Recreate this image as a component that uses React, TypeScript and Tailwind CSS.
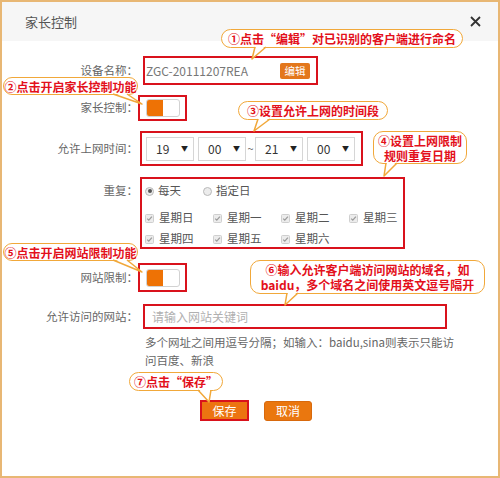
const font = { fontFamily: '"Noto Sans CJK SC", "Noto Sans", sans-serif' };

function Toggle() {
  return (
    <div className="flex h-[18px] w-[34px] overflow-hidden rounded-[3px] border border-[#d2d2d2] bg-white">
      <div className="h-full w-[16px] bg-[#ee7205]" />
    </div>
  );
}

function TimeSelect({ value }: { value: string }) {
  return (
    <div className="flex h-[24px] w-[48px] items-center justify-between border border-[#d6d6d6] bg-white pl-[9px] pr-[5px] text-[12px] text-[#333]">
      <span>{value}</span>
      <span className="text-[7px] text-[#222]">▼</span>
    </div>
  );
}

function Radio({ checked, label }: { checked?: boolean; label: string }) {
  return (
    <div className="flex items-center gap-[4px]">
      <span className="flex h-[9px] w-[9px] items-center justify-center rounded-full border border-[#b9b9b9] bg-[#ececec]">
        {checked && <span className="h-[4px] w-[4px] rounded-full bg-[#555]" />}
      </span>
      <span>{label}</span>
    </div>
  );
}

function Check({ label }: { label: string }) {
  return (
    <div className="flex items-center gap-[5px]">
      <svg width="9" height="9" viewBox="0 0 9 9">
        <rect x="0.5" y="0.5" width="8" height="8" rx="1" fill="#ececec" stroke="#cfcfcf" />
        <path d="M2.2 4.6 L3.8 6.2 L6.9 2.6" fill="none" stroke="#9a9a9a" strokeWidth="1.2" />
      </svg>
      <span>{label}</span>
    </div>
  );
}

function Label({ children, className = '' }: { children: React.ReactNode; className?: string }) {
  return <div className={`w-[136px] shrink-0 text-right text-[11.5px] text-[#666] ${className}`}>{children}</div>;
}

// callout bubbles laid over the form
const bubbles = [
  { left: 221, top: 29, w: 242, h: 19, lines: ['①点击“编辑”对已识别的客户端进行命名'] },
  { left: 3, top: 77, w: 135, h: 18, lines: ['②点击开启家长控制功能'] },
  { left: 238, top: 101, w: 150, h: 19, lines: ['③设置允许上网的时间段'] },
  { left: 373, top: 131, w: 94, h: 33, lines: ['④设置上网限制', '规则重复日期'] },
  { left: 3, top: 243, w: 135, h: 18, lines: ['⑤点击开启网站限制功能'] },
  { left: 250, top: 260, w: 235, h: 34, lines: ['⑥输入允许客户端访问网站的域名，如', 'baidu，多个域名之间使用英文逗号隔开'] },
  { left: 129, top: 372, w: 94, h: 19, lines: ['⑦点击“保存”'] },
];

// tail: base x1..x2 on bubble bottom y, tip point
const tails = [
  { x1: 255, x2: 266, y: 48, tx: 252, ty: 59 },
  { x1: 113, x2: 127, y: 95, tx: 142, ty: 104 },
  { x1: 258, x2: 270, y: 120, tx: 254, ty: 131 },
  { x1: 386, x2: 397, y: 164, tx: 384, ty: 176 },
  { x1: 113, x2: 127, y: 261, tx: 142, ty: 272 },
  { x1: 287, x2: 298, y: 294, tx: 285, ty: 305 },
  { x1: 198, x2: 211, y: 391, tx: 209, ty: 402 },
];

export default function App() {
  const weekdays = ['星期日', '星期一', '星期二', '星期三', '星期四', '星期五', '星期六'];

  return (
    <div className="relative h-[478px] w-[500px] overflow-hidden bg-white" style={font}>
      <div className="flex h-full w-full flex-col border-2 border-[#e8b774] bg-white">
        {/* Header */}
        <div className="flex h-[39px] shrink-0 items-center justify-between bg-[#f6f6f6] pl-[23px] pr-[17px]">
          <span className="text-[13px] text-[#555]">家长控制</span>
          <svg width="11" height="11" viewBox="0 0 11 11">
            <path d="M1 1 L10 10 M10 1 L1 10" stroke="#333" strokeWidth="1.8" />
          </svg>
        </div>

        {/* Form */}
        <div className="flex flex-col">
          <div className="mt-[15px] flex items-center">
            <Label>设备名称：</Label>
            <div className="ml-[5px] flex h-[29px] w-[175px] items-center justify-between border-2 border-[#d9121c] pl-[1px] pr-[6px]">
              <span className="text-[12px] text-[#777]">ZGC-20111207REA</span>
              <span className="flex h-[16px] w-[30px] items-center justify-center rounded-[2px] bg-[#e3771c] text-[10.5px] text-white">
                编辑
              </span>
            </div>
          </div>

          <div className="mt-[10px] flex items-center">
            <Label>家长控制：</Label>
            <div className="flex h-[26px] w-[49px] items-center border-2 border-[#d9121c] pl-[6px]">
              <Toggle />
            </div>
          </div>

          <div className="mt-[10px] flex items-center">
            <Label>允许上网时间：</Label>
            <div className="ml-[2px] flex h-[35px] w-[223px] items-center border-2 border-[#d9121c] pl-[4px]">
              <TimeSelect value="19" />
              <div className="ml-[4px]">
                <TimeSelect value="00" />
              </div>
              <span className="w-[9px] text-center text-[11px] text-[#666]">~</span>
              <TimeSelect value="21" />
              <div className="ml-[4px]">
                <TimeSelect value="00" />
              </div>
            </div>
          </div>

          <div className="mt-[11px] flex items-start">
            <Label className="pt-[5px]">重复：</Label>
            <div className="ml-[2px] flex h-[72px] w-[265px] flex-col border-2 border-[#d9121c] pl-[3px] pt-[4px] text-[11.5px] text-[#555]">
              <div className="flex h-[16px] items-center gap-[22px]">
                <Radio checked label="每天" />
                <Radio label="指定日" />
              </div>
              <div className="mt-[11px] grid grid-cols-[68px_68px_68px_68px] gap-y-[5px]">
                {weekdays.map((d) => (
                  <div key={d} className="flex h-[16px] items-center">
                    <Check label={d} />
                  </div>
                ))}
              </div>
            </div>
          </div>

          <div className="mt-[14px] flex items-center">
            <Label>网站限制：</Label>
            <div className="flex h-[29px] w-[49px] items-center border-2 border-[#d9121c] pl-[6px]">
              <Toggle />
            </div>
          </div>

          <div className="mt-[12px] flex items-center">
            <Label>允许访问的网站：</Label>
            <div className="ml-[5px] flex h-[25px] w-[304px] items-center border-2 border-[#d9121c] pl-[7px]">
              <span className="text-[12px] text-[#b0b0b0]">请输入网站关键词</span>
            </div>
          </div>

          <div className="mt-[4px] flex">
            <div className="w-[136px] shrink-0" />
            <p className="ml-[7px] text-[11.5px] leading-[18px] text-[#666]">
              多个网址之间用逗号分隔；如输入：baidu,sina则表示只能访
              <br />
              问百度、新浪
            </p>
          </div>

          <div className="ml-[198px] mt-[31px] flex items-center gap-[15px]">
            <button className="flex h-[21px] w-[49px] items-center justify-center border-2 border-[#d9121c] bg-[#ec7411] text-[12px] text-white">
              保存
            </button>
            <button className="flex h-[20px] w-[48px] items-center justify-center rounded-[3px] border border-[#d8690c] bg-[#ea770f] text-[12px] text-white">
              取消
            </button>
          </div>
        </div>
      </div>

      {/* Callouts */}
      {bubbles.map((b, i) => (
        <div
          key={i}
          className="absolute flex flex-col items-center justify-center rounded-[10px] border-[1.5px] border-[#f1a83a] bg-white text-[12px] font-bold leading-[15px] text-[#e3101b]"
          style={{ left: b.left, top: b.top, width: b.w, height: b.h }}
        >
          {b.lines.map((l) => (
            <span key={l} className="whitespace-nowrap">
              {l}
            </span>
          ))}
        </div>
      ))}
      <svg className="pointer-events-none absolute left-0 top-0" width="500" height="478">
        {tails.map((t, i) => (
          <g key={i}>
            <polygon points={`${t.x1 + 0.8},${t.y - 2} ${t.x2 - 0.8},${t.y - 2} ${t.tx},${t.ty}`} fill="#fff" />
            <polyline
              points={`${t.x1},${t.y - 1} ${t.tx},${t.ty} ${t.x2},${t.y - 1}`}
              fill="none"
              stroke="#f1a83a"
              strokeWidth="1.5"
              strokeLinejoin="round"
            />
          </g>
        ))}
      </svg>
    </div>
  );
}
